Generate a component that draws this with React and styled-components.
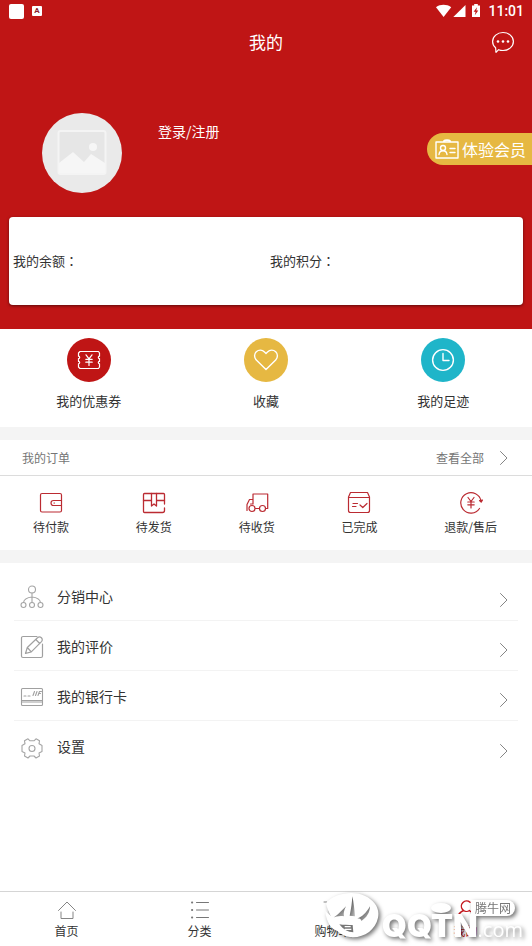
import React from 'react';
import styled, { createGlobalStyle } from 'styled-components';

const App = () => {
  return (
    <>
      <GlobalStyle />
      <Page>
        <Header>
          <StatusBar>
            <StatusGroup>
              <AppSquare />
              <InputBadge>A</InputBadge>
            </StatusGroup>
            <StatusGroup>
              <StatusIcons />
              <Clock>11:01</Clock>
            </StatusGroup>
          </StatusBar>
          <TitleBar>
            <Title>我的</Title>
            <MessageButton aria-label="消息">
              <MessageIcon />
            </MessageButton>
          </TitleBar>
          <Profile>
            <Avatar>
              <PictureIcon />
            </Avatar>
            <LoginLink href="#login">登录/注册</LoginLink>
            <MemberButton>
              <MemberIcon />
              体验会员
            </MemberButton>
          </Profile>
          <BalanceCard>
            <BalanceItem>我的余额<Colon>：</Colon></BalanceItem>
            <BalanceItem>我的积分<Colon>：</Colon></BalanceItem>
          </BalanceCard>
        </Header>

        <Shortcuts>
          {shortcuts.map(({ label, color, icon: Icon }) => (
            <Shortcut key={label} href="#shortcut">
              <ShortcutCircle $color={color}>
                <Icon />
              </ShortcutCircle>
              {label}
            </Shortcut>
          ))}
        </Shortcuts>

        <Orders>
          <OrdersHeader>
            <OrdersTitle>我的订单</OrdersTitle>
            <AllOrders href="#orders">
              查看全部
              <Chevron />
            </AllOrders>
          </OrdersHeader>
          <OrderList>
            {orders.map(({ label, icon: Icon }) => (
              <OrderLink key={label} href="#order">
                <Icon />
                {label}
              </OrderLink>
            ))}
          </OrderList>
        </Orders>

        <Menu>
          {menu.map(({ label, icon: Icon }) => (
            <MenuRow key={label} href="#menu">
              <Icon />
              <MenuLabel>{label}</MenuLabel>
              <MenuArrow>
                <Chevron />
              </MenuArrow>
            </MenuRow>
          ))}
        </Menu>

        <TabBar>
          {tabs.map(({ label, icon: Icon, active }) => (
            <Tab key={label} href="#tab" $active={active}>
              <Icon />
              {label}
            </Tab>
          ))}
          <Watermark>
            <WatermarkLogo />
            <WatermarkText>
              <WatermarkTop>
                <WatermarkHead />
                <WatermarkName>腾牛网</WatermarkName>
              </WatermarkTop>
              <WatermarkSite>
                QQTN<small>.com</small>
              </WatermarkSite>
            </WatermarkText>
          </Watermark>
        </TabBar>
      </Page>
    </>
  );
};

/* ---------- icons ---------- */

const LineIcon = ({ size = 24, height, color = 'currentColor', width = 1, box, children }) => (
  <svg
    width={size}
    height={height || size}
    viewBox={box || `0 0 ${size} ${height || size}`}
    fill="none"
    stroke={color}
    strokeWidth={width}
    strokeLinecap="round"
    strokeLinejoin="round"
    aria-hidden="true"
  >
    {children}
  </svg>
);

const StatusIcons = () => (
  <svg width="46" height="14" viewBox="0 0 46 14" fill="#fff" aria-hidden="true">
    <path d="M0 3.2C4.5 0 10.500 0 15.200 3.200L7.600 13Z" />
    <path d="M29.500 1V13H17.300Z" />
    <path d="M36 1.500h2.200V0h3.600v1.500H44V13h-8Z" />
    <path d="M41 3.200 37.600 7.800h2l-.8 3.400 3.500-4.800h-2Z" fill="#bf1515" />
  </svg>
);

const MessageIcon = () => (
  <LineIcon size={24} width={1.2}>
    <path d="M4.600 17.800C2.700 16.200 1.600 14 1.600 11.500c0-5 4.700-9 10.400-9s10.400 4 10.400 9-4.700 9-10.400 9c-1.600 0-3.100-.3-4.400-.8L5 22.300Z" />
    <g fill="currentColor" stroke="none">
      <circle cx="7" cy="11.500" r="1.300" />
      <circle cx="12" cy="11.500" r="1.300" />
      <circle cx="17" cy="11.500" r="1.300" />
    </g>
  </LineIcon>
);

const PictureIcon = () => (
  <svg width="50" height="48" viewBox="0 0 50 48" aria-hidden="true">
    <rect x="1.500" y="2" width="47" height="43" rx="2" fill="#e6e6e6" stroke="#f4f4f4" strokeWidth="2" />
    <path d="M2 34 16 23 27 33 34 25 48 34V44H2Z" fill="#f6f6f6" />
    <circle cx="36" cy="18" r="4" fill="#f6f6f6" />
  </svg>
);

const MemberIcon = () => (
  <LineIcon size={24} height={20} width={1.400}>
    <rect x="1" y="3" width="22" height="16" />
    <path d="M9 2.200C10 .8 14 .8 15 2.200" strokeWidth="2" />
    <circle cx="8" cy="9" r="2.500" />
    <path d="M4 15.500c.3-2.500 1.600-3.800 4-3.800s3.700 1.300 4 3.800M15 9.500h5M15 13.500h5" />
  </LineIcon>
);

const CouponIcon = () => (
  <LineIcon size={24} height={20} width={1.200}>
    <path d="M3 1.500h18.500L22.500 3v3.200c-1.600.2-1.600 2.200 0 2.400v2.800c-1.600.2-1.600 2.200 0 2.400V17l-1 1.500H3L1.500 17v-3.200c1.600-.2 1.600-2.200 0-2.400V8.600c1.600-.2 1.600-2.200 0-2.400V3Z" />
    <path d="M9 4.800l3 4 3-4M12 8.800v6.700M8.800 9.300h6.400M8.800 12.200h6.400" />
  </LineIcon>
);

const HeartIcon = () => (
  <LineIcon size={26} height={24} width={1.400}>
    <path d="M13 21.500 3.300 12C1 9.700 1 6 3.300 3.800c2.300-2.200 5.900-2.200 8.200.1L13 5.400l1.500-1.500c2.300-2.300 5.900-2.300 8.200-.1C25 6 25 9.700 22.700 12Z" />
  </LineIcon>
);

const ClockIcon = () => (
  <LineIcon size={24} width={1.400}>
    <circle cx="12" cy="12" r="10.400" />
    <path d="M12 5.500V12.500h6" />
  </LineIcon>
);

const WalletIcon = () => (
  <LineIcon size={24} color="#bb2b32" width={1.200}>
    <rect x="1.500" y="2.500" width="21" height="18.500" rx="1.500" />
    <path d="M22.500 9.500H14.500a2.500 2.500 0 0 0 0 5H22.500M15 12h.5" />
  </LineIcon>
);

const BoxIcon = () => (
  <LineIcon size={24} color="#bb2b32" width={1.300}>
    <path d="M22.500 13V3.500a1 1 0 0 0-1-1H2.500a1 1 0 0 0-1 1V20.500a1 1 0 0 0 1 1H20.500a2 2 0 0 0 2-2V17" />
    <path d="M9.500 2.500V15l2.500-2 2.500 2V2.500M1.500 9.500h8M14.500 9.500h8" />
  </LineIcon>
);

const TruckIcon = () => (
  <LineIcon size={24} color="#bb2b32" width={1.200}>
    <path d="M2 19.500v-6L4.500 8.500H8V3H22.700V17.500h-2M8 8v5H5.500" />
    <path d="M10.500 17.500h4" />
    <circle cx="7" cy="17.500" r="3" />
    <circle cx="17.500" cy="17.500" r="3" />
  </LineIcon>
);

const DoneIcon = () => (
  <LineIcon size={24} color="#bb2b32" width={1.200}>
    <path d="M1.500 6V19.500a2 2 0 0 0 2 2h17a2 2 0 0 0 2-2V6L20.500 1.500h-17ZM1.500 6.500h21" />
    <path d="M6 12.500h4.500M5.500 15.500H9M13 14l2.800 2.500 4.200-4" />
  </LineIcon>
);

const RefundIcon = () => (
  <LineIcon size={24} color="#bb2b32" width={1.200}>
    <path d="M22 10A10.200 10.200 0 1 0 20.500 17.500" />
    <path d="M20.500 9.500 22.200 11.200 23.500 9Z" fill="#bb2b32" />
    <path d="M9 6.500l3 4 3-4M12 10.500v6.500M8.800 11h6.400M8.800 13.800h6.400" />
  </LineIcon>
);

const NetworkIcon = () => (
  <LineIcon size={24} color="#a5a5a5" width={1.100}>
    <circle cx="12" cy="4.500" r="3.500" />
    <circle cx="3.500" cy="20" r="2.500" />
    <circle cx="12" cy="20" r="2.500" />
    <circle cx="20.500" cy="20" r="2.500" />
    <path d="M12 8v9.500M3.500 17.500C4 13.800 7 12.500 12 12c5 .5 8 1.800 8.500 5.500" />
  </LineIcon>
);

const EditIcon = () => (
  <LineIcon size={24} color="#a0a0a0" width={1.200}>
    <path d="M17 1.500H3a1.500 1.500 0 0 0-1.500 1.500V21A1.500 1.500 0 0 0 3 22.500H21a1.500 1.500 0 0 0 1.500-1.500V9" />
    <path d="M5.500 18.500 7.300 12.500 17.500 2.800a2.500 2.500 0 0 1 4 3.800L11.300 16.800ZM7.300 12.500l4 4.300M15.800 4.500l3.900 4" />
  </LineIcon>
);

const CardIcon = () => (
  <LineIcon size={24} color="#a0a0a0" width={1.100}>
    <rect x="1.500" y="3.500" width="21" height="17" rx="1" />
    <path d="M1.500 15.500h21M1.500 17h21M4 11h2M8 11h2" />
    <path d="M13 10.500l1.500-4M15.500 10.500l1.500-4M18 10.500l1.500-4h2M18.500 8.500h2" />
  </LineIcon>
);

const GearIcon = () => (
  <LineIcon size={24} color="#a5a5a5" width={1.100}>
    <path d="M8 2.800 10 4.800h4l2-2 3.500 2-.5 3 3 1.700v6L19 17l.5 3-3.500 2-2-2h-4l-2 2-3.500-2L5 17l-3-1.500v-6l3-1.700-.5-3Z" />
    <circle cx="12" cy="12.500" r="3" />
  </LineIcon>
);

const Chevron = () => (
  <LineIcon size={10} height={16} color="#858585">
    <path d="M1.500 1.500 8 8 1.500 14.500" />
  </LineIcon>
);

const HomeIcon = () => (
  <LineIcon size={20} color="#858585">
    <path d="M1.500 10.500 10 2l8.500 8.500M4 12v6.500H16V12" />
  </LineIcon>
);

const ListIcon = () => (
  <LineIcon size={20} color="#777">
    <path d="M6.500 2.500H18.500M6.500 10H18.500M6.500 17.500H18.500" />
    <path d="M2 2.500h.2M2 10h.2M2 17.500h.2" strokeWidth="2" />
  </LineIcon>
);

const CartIcon = () => (
  <LineIcon size={20} color="#858585">
    <path d="M1 2h3l2.500 11H17l2-8H5" />
    <circle cx="8" cy="17" r="1.500" />
    <circle cx="15" cy="17" r="1.500" />
  </LineIcon>
);

const UserIcon = () => (
  <LineIcon size={20} color="#c4161c" width={1.400}>
    <path d="M14 2.300A5.200 5.200 0 1 0 13.500 10.500M7.500 10.500C4 12 2 14.500 1.500 18.500M14 11c2.500 1.500 4 4 4.500 7.500" />
  </LineIcon>
);

const WatermarkLogo = () => (
  <svg width="58" height="48" viewBox="0 0 174 144" aria-hidden="true">
    <defs>
      <linearGradient id="blade" x1="0" y1="0" x2="1" y2="1">
        <stop offset="0" stopColor="#333" />
        <stop offset="1" stopColor="#c4c4c4" />
      </linearGradient>
    </defs>
    <path
      d="M6 30C30 2 84-8 122 8c30 14 46 38 40 66-8 38-44 62-84 58-16-2-28-8-38-18C20 108 6 84 4 54l16 14C12 54 8 42 6 30Z"
      fill="#fff"
    />
    <path d="M85 10c-1 18-3 34-8 58l16 2c-2-24-4-42-8-60Z" fill="url(#blade)" />
    <path d="M24 76C38 70 50 56 66 40c-6 12-8 22-6 30-12-2-24 0-36 6Z" fill="url(#blade)" />
    <path d="M100 76c14-4 26-16 38-36 0 18-10 34-26 44 0-4-4-8-12-8Z" fill="url(#blade)" />
    <path d="M46 94c12 2 26 2 40 2l2 22c-16 0-30-8-42-24Z" fill="#555" opacity=".8" />
    <path d="M62 101h18M62 109h20" stroke="#fff" strokeWidth="4" />
  </svg>
);

const shortcuts = [
  { label: '我的优惠券', color: '#bf1515', icon: CouponIcon },
  { label: '收藏', color: '#e6b842', icon: HeartIcon },
  { label: '我的足迹', color: '#1fb5c9', icon: ClockIcon },
];

const orders = [
  { label: '待付款', icon: WalletIcon },
  { label: '待发货', icon: BoxIcon },
  { label: '待收货', icon: TruckIcon },
  { label: '已完成', icon: DoneIcon },
  { label: '退款/售后', icon: RefundIcon },
];

const menu = [
  { label: '分销中心', icon: NetworkIcon },
  { label: '我的评价', icon: EditIcon },
  { label: '我的银行卡', icon: CardIcon },
  { label: '设置', icon: GearIcon },
];

const tabs = [
  { label: '首页', icon: HomeIcon },
  { label: '分类', icon: ListIcon },
  { label: '购物车', icon: CartIcon },
  { label: '我的', icon: UserIcon, active: true },
];

/* ---------- layout ---------- */

const GlobalStyle = createGlobalStyle`
  * {
    box-sizing: border-box;
  }
  body {
    margin: 0;
    background: #fff;
    color: #333;
    font-family: 'Noto Sans CJK SC', sans-serif;
    font-size: 13px;
    line-height: 20px;
  }
  a {
    color: inherit;
    text-decoration: none;
  }
  button {
    border: 0;
    padding: 0;
    background: none;
    color: inherit;
    font: inherit;
    cursor: pointer;
  }
  svg {
    display: block;
    flex-shrink: 0;
  }
`;

const Page = styled.div`
  min-height: 100vh;
  display: flex;
  flex-direction: column;
`;

const Header = styled.header`
  background: #bf1515;
  color: #fff;
  padding-bottom: 24px;
`;

const StatusBar = styled.div`
  height: 22px;
  padding: 0 8px;
  display: flex;
  align-items: center;
  justify-content: space-between;
`;

const StatusGroup = styled.div`
  display: flex;
  align-items: center;
  gap: 6px;
`;

const AppSquare = styled.span`
  width: 15px;
  height: 15px;
  margin-left: 1px;
  border-radius: 2px;
  background: #fff;
`;

const InputBadge = styled.span`
  width: 10px;
  height: 10px;
  margin-left: 2px;
  border-radius: 1px;
  background: #fff;
  color: #8a1c2c;
  font: bold 8px/10px 'Roboto', sans-serif;
  text-align: center;
`;

const Clock = styled.time`
  font: 500 14px/20px 'Roboto', sans-serif;
`;

const TitleBar = styled.div`
  display: grid;
  grid-template-columns: 1fr auto 1fr;
  align-items: center;
  height: 40px;
  padding: 0 17px;
`;

const Title = styled.h1`
  grid-column: 2;
  margin: 0;
  font-size: 17px;
  line-height: 24px;
  font-weight: 400;
`;

const MessageButton = styled.button`
  justify-self: end;
`;

const Profile = styled.section`
  display: flex;
  align-items: flex-start;
  padding: 51px 0 24px 42px;
`;

const Avatar = styled.div`
  width: 80px;
  height: 80px;
  border-radius: 50%;
  background: #eaeaea;
  display: flex;
  align-items: center;
  justify-content: center;
`;

const LoginLink = styled.a`
  flex: 1;
  padding: 8px 0 0 36px;
  font-size: 14px;
`;

const MemberButton = styled.button`
  display: flex;
  align-items: center;
  gap: 3px;
  height: 32px;
  margin-top: 20px;
  padding: 0 6px 0 8px;
  border-radius: 16px 0 0 16px;
  background: #e6b842;
  font-size: 16px;
`;

const BalanceCard = styled.section`
  display: grid;
  grid-template-columns: 1fr 1fr;
  align-items: center;
  height: 88px;
  margin: 0 9px;
  border-radius: 4px;
  background: #fff;
  color: #333;
  box-shadow: 0 1px 3px rgba(0, 0, 0, 0.5);
`;

const BalanceItem = styled.div`
  padding-left: 4px;
`;

/* the traditional face centres the full-width colon in its box */
const Colon = styled.span`
  font-family: 'Noto Sans CJK TC', sans-serif;
`;

const Shortcuts = styled.nav`
  display: grid;
  grid-template-columns: repeat(3, 1fr);
  padding: 9px 0 16px;
`;

const Shortcut = styled.a`
  display: flex;
  flex-direction: column;
  align-items: center;
  gap: 9px;
`;

const ShortcutCircle = styled.span`
  width: 44px;
  height: 44px;
  border-radius: 50%;
  background: ${({ $color }) => $color};
  color: #fff;
  display: flex;
  align-items: center;
  justify-content: center;
`;

const Orders = styled.section`
  border: solid #f4f4f4;
  border-width: 13px 0;
`;

const OrdersHeader = styled.div`
  display: flex;
  align-items: center;
  justify-content: space-between;
  height: 36px;
  padding: 0 23px 0 22px;
  border-bottom: 1px solid #dcdcdc;
  color: #757575;
`;

const OrdersTitle = styled.h2`
  margin: 0;
  font-size: 12px;
  font-weight: 400;
`;

const AllOrders = styled.a`
  display: flex;
  align-items: center;
  gap: 15px;
  font-size: 12px;
`;

const OrderList = styled.nav`
  display: flex;
  justify-content: space-between;
  padding: 15px 35px 13px 33px;
`;

const OrderLink = styled.a`
  display: flex;
  flex-direction: column;
  align-items: center;
  gap: 2px;
  font-size: 12px;
`;

const Menu = styled.nav`
  flex: 1;
  padding: 8px 14px;
`;

const MenuRow = styled.a`
  display: flex;
  align-items: center;
  gap: 13px;
  height: 50px;
  padding: 3px 9px 0 6px;
  border-bottom: 1px solid #f3f3f3;
  &:last-child {
    border-bottom: 0;
  }
`;

const MenuLabel = styled.span`
  flex: 1;
  padding-bottom: 3px;
  font-size: 14px;
`;

const MenuArrow = styled.span`
  padding-top: 6px;
`;

const TabBar = styled.nav`
  position: sticky;
  bottom: 0;
  display: grid;
  grid-template-columns: repeat(4, 1fr);
  height: 55px;
  border-top: 1px solid #d5d5d5;
  background: #fff;
`;

const Tab = styled.a`
  display: flex;
  flex-direction: column;
  align-items: center;
  padding-top: 8px;
  gap: 1px;
  font-size: 12px;
  color: ${({ $active }) => ($active ? '#c4161c' : '#333')};
`;

/* stamp that lies over the right end of the tab bar */
const Watermark = styled.div`
  position: absolute;
  right: 9px;
  top: 1px;
  display: flex;
  color: #fff;
  filter: drop-shadow(2px 2px 2px rgba(0, 0, 0, 0.55));
  pointer-events: none;
`;

const WatermarkText = styled.div`
  display: flex;
  flex-direction: column;
  align-items: flex-end;
  padding-top: 7px;
`;

const WatermarkTop = styled.div`
  display: flex;
  align-items: center;
  gap: 20px;
  margin-right: 8px;
`;

const WatermarkHead = styled.span`
  width: 20px;
  height: 10px;
  border-radius: 50%;
  background: #fff;
`;

const WatermarkName = styled.span`
  padding: 0 4px;
  border-radius: 0 8px 8px 0;
  background: #fff;
  color: #777;
  font-size: 12px;
  line-height: 16px;
`;

const WatermarkSite = styled.span`
  font: 900 32px/20px 'Inter', sans-serif;
  small {
    font: 500 20px/20px 'Open Sans', sans-serif;
  }
`;

export default App;
